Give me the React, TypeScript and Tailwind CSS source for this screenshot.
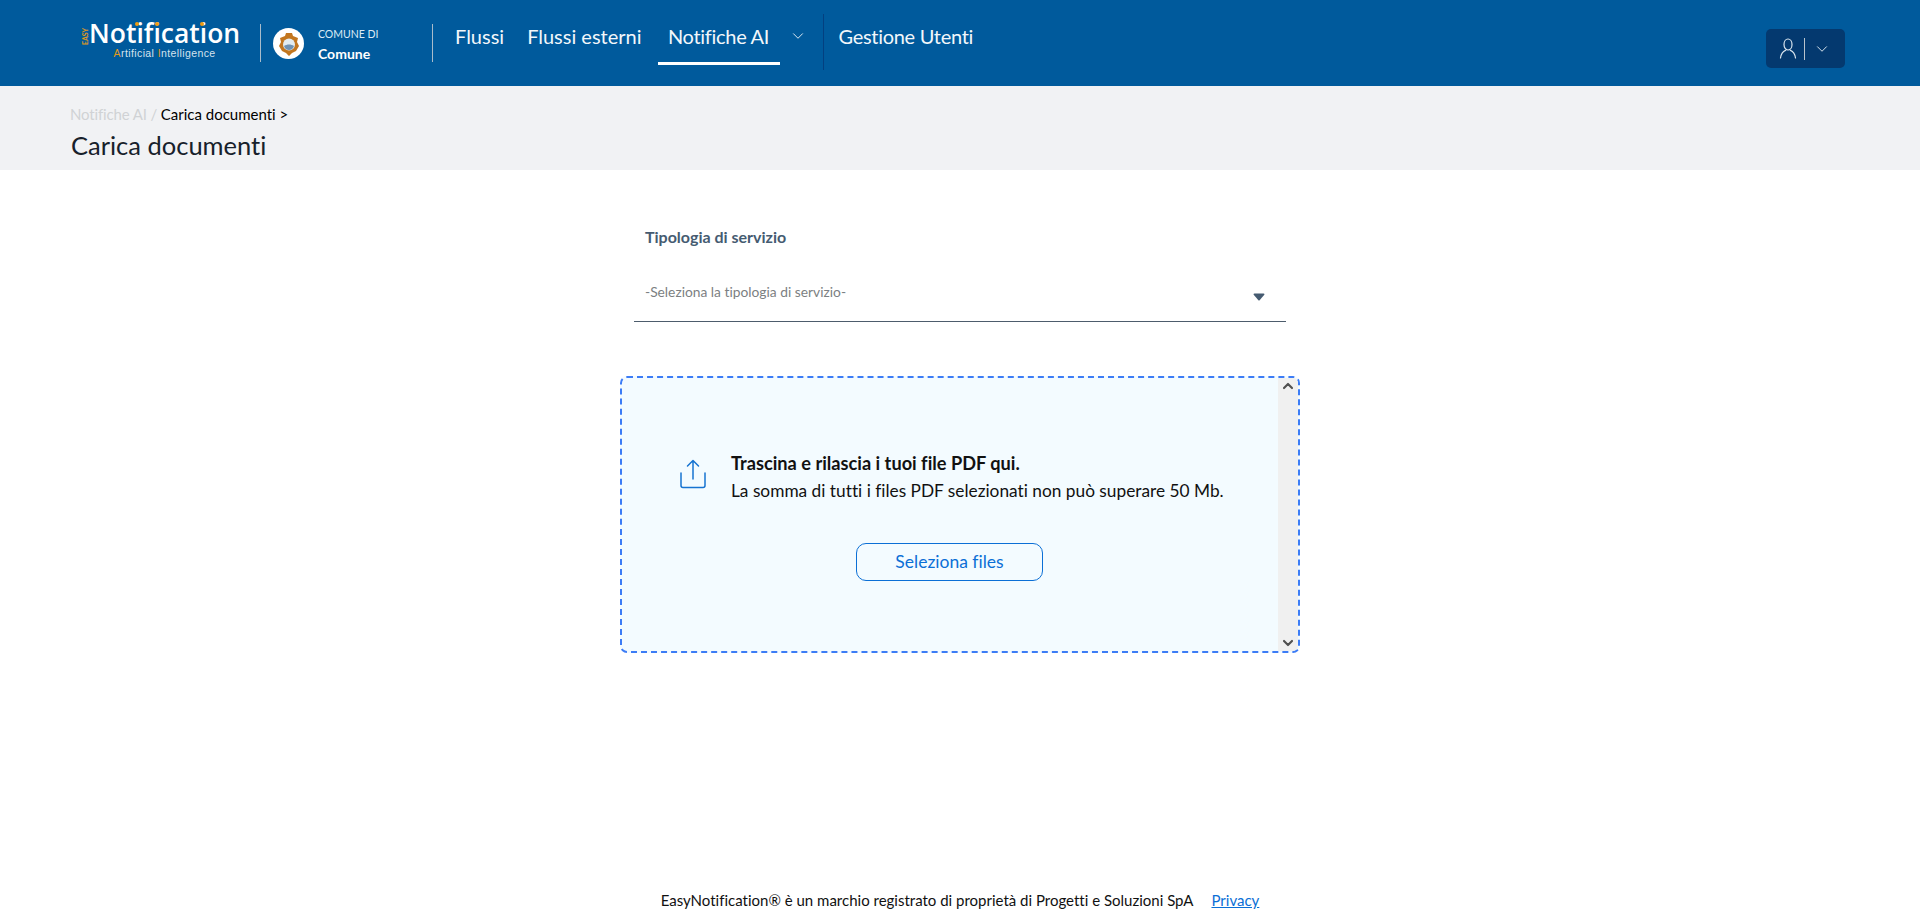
import { ChevronDown, ChevronUp } from "lucide-react";

function Logo() {
  return (
    <div className="flex items-start pt-[20px] w-[177px]">
      <span className="mt-[5px] h-[22px] w-[6px] flex items-center justify-center">
        <span className="-rotate-90 text-[7px] font-bold text-[#e09a1b] leading-none">EASY</span>
      </span>
      <div className="flex flex-col items-center">
        <span className="relative [font-family:'Open_Sans',sans-serif] text-[26.5px] leading-[27px] font-semibold text-white">
          Notification
          <span className="absolute left-[46px] top-[2px] h-[4px] w-[4px] rounded-full bg-[#f09a10]" />
          <span className="absolute left-[66px] top-[2px] h-[4px] w-[4px] rounded-full bg-[#f09a10]" />
          <span className="absolute left-[111px] top-[2px] h-[4px] w-[4px] rounded-full bg-[#f09a10]" />
        </span>
        <span className="[font-family:'Liberation_Sans',sans-serif] text-[10.5px] leading-[12px] tracking-[0.4px] text-[#d5e3ee]">
          <span className="text-[#e09a1b]">A</span>rtificial <span className="text-[#e09a1b]">I</span>ntelligence
        </span>
      </div>
    </div>
  );
}

function Crest() {
  return (
    <div className="h-[31px] w-[31px] rounded-full bg-white flex items-center justify-center">
      <svg width="22" height="24" viewBox="0 0 22 24">
        <path d="M8 1h6l1 3 5 2-1 4 2 4-3 5-4 2-3 3-3-3-4-2-3-5 2-4-1-4 5-2z" fill="#c2761f" />
        <circle cx="11" cy="12.5" r="6" fill="#e3edf2" />
        <path d="M6 14c3-2 7-2 10 0-1 3-3 4-5 4s-4-1-5-4z" fill="#6f92b3" />
      </svg>
    </div>
  );
}

function UserGlyph() {
  return (
    <svg width="20" height="24" viewBox="0 0 20 24" fill="none" stroke="#dbe6ef" strokeWidth="1.2" strokeLinecap="round">
      <ellipse cx="10" cy="7.5" rx="4" ry="5.5" />
      <path d="M2.5 21c.6-4.2 3-6.8 5-7.6M17.5 21c-.6-4.2-3-6.8-5-7.6" />
    </svg>
  );
}

function UploadGlyph() {
  return (
    <svg width="26" height="30" viewBox="0 0 26 30" fill="none" stroke="#1673d1" strokeWidth="1.5" strokeLinecap="round" strokeLinejoin="round" className="mt-[10px] shrink-0">
      <path d="M13 20V1.5M7.5 7L13 1.5 18.5 7" />
      <path d="M1 14v12.5a2 2 0 0 0 2 2h20a2 2 0 0 0 2-2V14" />
    </svg>
  );
}

function Header() {
  return (
    <header className="h-[86px] bg-[#005a9c] flex items-start pl-[83px] pr-[75px] text-white">
      <Logo />
      <div className="mt-[24px] h-[38px] w-px bg-[#a9bccb]" />
      <div className="ml-[12px] mt-[28px]">
        <Crest />
      </div>
      <div className="ml-[14px] w-[114px] mt-[27px]">
        <div className="text-[10.5px] leading-[15px] text-[#dcebf5]">COMUNE DI</div>
        <div className="mt-[2px] text-[14px] leading-[20px] font-bold">Comune</div>
      </div>
      <div className="mt-[24px] h-[38px] w-px bg-[#a9bccb]" />
      <nav className="flex items-start text-[20px] leading-[26px] text-[#f2f7fb] ml-[22px]">
        <span className="pt-[23px]">Flussi</span>
        <span className="pt-[23px] ml-[23px]">Flussi esterni</span>
        <span className="ml-[16px] h-[65px] w-[122px] pt-[23px] border-b-[3px] border-white text-center tracking-[-0.3px]">
          Notifiche AI
        </span>
        <span className="ml-[9px] pt-[27px] w-[24px]">
          <ChevronDown size={18} strokeWidth={1.2} />
        </span>
        <span className="ml-[10px] mt-[14px] h-[56px] w-px bg-[#034080]" />
        <span className="pt-[23px] ml-[15px] tracking-[-0.3px]">Gestione Utenti</span>
      </nav>
      <div className="ml-auto mt-[29px] h-[39px] w-[79px] rounded-[5px] bg-[#04396f] flex items-center pl-[12px]">
        <UserGlyph />
        <span className="ml-[6px] h-[22px] w-px bg-[#b9c3cc]" />
        <ChevronDown size={18} strokeWidth={1.3} className="ml-[8px] text-[#dbe6ef]" />
      </div>
    </header>
  );
}

function Breadcrumb() {
  return (
    <section className="h-[84px] bg-[#f1f2f4] pl-[70px] pt-[18px]">
      <div className="text-[15px] leading-[20px]">
        <span className="text-[#d0d2d5] tracking-[-0.15px]">Notifiche AI / </span>
        <span className="text-black">Carica documenti &gt;</span>
      </div>
      <h1 className="mt-[5px] ml-px text-[25.5px] leading-[32px] text-[#17212b]">Carica documenti</h1>
    </section>
  );
}

function ServiceSelect() {
  return (
    <div className="w-[652px] ml-[14px]">
      <div className="pl-[11px] text-[16px] leading-[22px] font-bold text-[#455b71]">Tipologia di servizio</div>
      <div className="mt-[32px] h-[42px] border-b border-[#4d5c6c] flex items-start justify-between pl-[11px] pr-[21px]">
        <span className="text-[13.8px] leading-[20px] text-[#7c7f82] pt-[2px]">-Seleziona la tipologia di servizio-</span>
        <svg width="12" height="8" viewBox="0 0 12 8" className="mt-[13px]">
          <path d="M0.5 1.5Q0.5 0.5 1.5 0.5H10.5Q11.5 0.5 11.5 1.5L6.6 7.3Q6 7.9 5.4 7.3Z" fill="#455b71" />
        </svg>
      </div>
    </div>
  );
}

function DropZone() {
  return (
    <div className="mt-[54px] w-[680px] h-[277px] rounded-[7px] border-2 border-dashed border-[#3c7cf6] bg-[#f3fbff] flex overflow-hidden">
      <div className="flex-1 pl-[58px] pt-[71px]">
        <div className="flex items-start">
          <UploadGlyph />
          <div className="ml-[25px] leading-[28px] text-[#111]">
            <div className="text-[18.2px] font-bold">Trascina e rilascia i tuoi file PDF qui.</div>
            <div className="text-[17.3px]">La somma di tutti i files PDF selezionati non può superare 50 Mb.</div>
          </div>
        </div>
        <button
          type="button"
          className="block mt-[38px] ml-[176px] h-[38px] w-[187px] rounded-[10px] border border-[#0b6fd6] text-[17.5px] text-[#0b6fd6]"
        >
          Seleziona files
        </button>
      </div>
      <div className="w-[20px] bg-[#f0f0f0] flex flex-col items-center justify-between text-[#505050]">
        <ChevronUp size={16} strokeWidth={3.2} />
        <ChevronDown size={16} strokeWidth={3.2} />
      </div>
    </div>
  );
}

export default function App() {
  return (
    <div className="h-[917px] flex flex-col bg-white [font-family:Lato,sans-serif] [font-variant-ligatures:none]">
      <Header />
      <Breadcrumb />
      <main className="flex-1 flex flex-col items-start pl-[620px] pt-[56px]">
        <ServiceSelect />
        <DropZone />
      </main>
      <footer className="h-[36px] pt-[9px] flex items-start justify-center text-[15px] leading-[20px] text-[#111]">
        <span>EasyNotification® è un marchio registrato di proprietà di Progetti e Soluzioni SpA</span>
        <a href="#" className="ml-[18px] text-[#0b6fd6] underline">Privacy</a>
      </footer>
    </div>
  );
}
